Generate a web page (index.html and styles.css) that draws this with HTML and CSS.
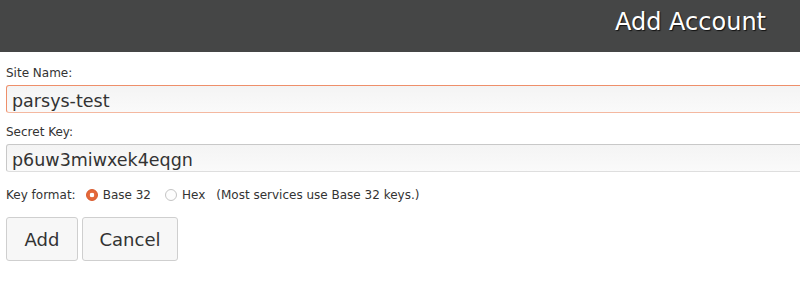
FILE: index.html
```html
<!DOCTYPE html>
<html lang="en">
<head>
    <meta charset="UTF-8">
    <title>Add Account</title>
    <link rel="stylesheet" href="styles.css">
</head>
<body>
    <div class="header">
        <h1>Add Account</h1>
    </div>

    <form class="form">
        <div class="field">
            <label for="site-name">Site Name:</label>
            <input type="text" id="site-name" class="text-input focused" value="parsys-test">
        </div>

        <div class="field">
            <label for="secret-key">Secret Key:</label>
            <input type="text" id="secret-key" class="text-input" value="p6uw3miwxek4eqgn">
        </div>

        <div class="format-row">
            <span class="format-label">Key format:</span>
            <label class="radio"><input type="radio" name="format" checked> Base 32</label>
            <label class="radio"><input type="radio" name="format"> Hex</label>
            <span class="hint">(Most services use Base 32 keys.)</span>
        </div>

        <div class="buttons">
            <button type="button" class="button add">Add</button>
            <button type="button" class="button cancel">Cancel</button>
        </div>
    </form>
</body>
</html>
```

FILE: styles.css
```css
* {
    margin: 0;
    padding: 0;
    box-sizing: border-box;
}

html, body {
    overflow: hidden;
}

body {
    font-family: "DejaVu Sans", "Open Sans", sans-serif;
    color: #333;
    background: #fff;
}

.header {
    height: 52px;
    background: #454646;
    text-align: right;
    padding: 8px 34px 0 0;
}

.header h1 {
    font-size: 24px;
    font-weight: normal;
    line-height: 1.2;
    color: #fff;
    text-shadow: 1px 1px 1px #111;
}

.form {
    padding: 0 0 0 6px;
}

.field label {
    display: block;
    font-size: 12px;
    line-height: 14px;
    color: #333;
}

.field:first-child label {
    padding-top: 14px;
    padding-bottom: 5px;
}

.field:nth-child(2) label {
    padding-top: 12px;
    padding-bottom: 5px;
}

.text-input {
    display: block;
    width: calc(100% + 20px);
    height: 28px;
    padding: 3px 5px 0;
    font-family: "DejaVu Sans", sans-serif;
    font-size: 17.5px;
    color: #333;
    border: 1px solid #c8c8c8;
    border-bottom-color: #dedede;
    border-radius: 3px;
    background: linear-gradient(#f4f4f4, #fafafa);
    outline: none;
}

.text-input.focused {
    border-color: #ee8f6a;
    border-bottom-color: #f4b8a0;
}

.format-row {
    display: flex;
    align-items: center;
    font-size: 12px;
    height: 14px;
    margin-top: 16px;
}

.format-label {
    margin-right: 10px;
}

.radio {
    display: flex;
    align-items: center;
    margin-right: 14px;
}

.radio input {
    appearance: none;
    width: 12px;
    height: 12px;
    border-radius: 50%;
    margin-right: 5px;
    border: 1px solid #c4c4c4;
    background: #fdfdfd;
}

.radio input:checked {
    border-color: #d9582a;
    background: radial-gradient(circle, #fff 0 2px, #e4683a 2.6px);
}

.hint {
    margin-left: -3px;
}

.buttons {
    display: flex;
    gap: 4px;
    margin-top: 15px;
}

.button {
    height: 44px;
    font-family: "DejaVu Sans", sans-serif;
    font-size: 18px;
    color: #333;
    background: #f7f7f7;
    border: 1px solid #cfcfcf;
    border-radius: 3px;
}

.add {
    width: 72px;
}

.cancel {
    width: 96px;
}
```
